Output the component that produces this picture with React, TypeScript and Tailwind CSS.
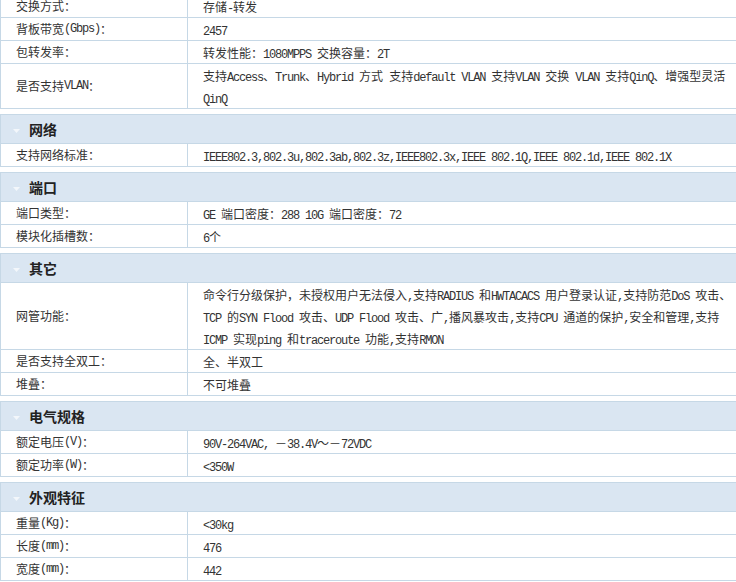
type Row = { label: string; value: string[] }
type Section = { title?: string; rows: Row[] }

const sections: Section[] = [
  {
    rows: [
      { label: '交换方式：', value: ['存储-转发'] },
      { label: '背板带宽(Gbps)：', value: ['2457'] },
      { label: '包转发率：', value: ['转发性能：1080MPPS 交换容量：2T'] },
      {
        label: '是否支持VLAN：',
        value: ['支持Access、Trunk、Hybrid 方式 支持default VLAN 支持VLAN 交换 VLAN 支持QinQ、增强型灵活', 'QinQ'],
      },
    ],
  },
  {
    title: '网络',
    rows: [
      {
        label: '支持网络标准：',
        value: ['IEEE802.3,802.3u,802.3ab,802.3z,IEEE802.3x,IEEE 802.1Q,IEEE 802.1d,IEEE 802.1X'],
      },
    ],
  },
  {
    title: '端口',
    rows: [
      { label: '端口类型：', value: ['GE 端口密度：288 10G 端口密度：72'] },
      { label: '模块化插槽数：', value: ['6个'] },
    ],
  },
  {
    title: '其它',
    rows: [
      {
        label: '网管功能：',
        value: [
          '命令行分级保护，未授权用户无法侵入,支持RADIUS 和HWTACACS 用户登录认证,支持防范DoS 攻击、',
          'TCP 的SYN Flood 攻击、UDP Flood 攻击、广,播风暴攻击,支持CPU 通道的保护,安全和管理,支持',
          'ICMP 实现ping 和traceroute 功能,支持RMON',
        ],
      },
      { label: '是否支持全双工：', value: ['全、半双工'] },
      { label: '堆叠：', value: ['不可堆叠'] },
    ],
  },
  {
    title: '电气规格',
    rows: [
      { label: '额定电压(V)：', value: ['90V-264VAC, －38.4V～－72VDC'] },
      { label: '额定功率(W)：', value: ['<350W'] },
    ],
  },
  {
    title: '外观特征',
    rows: [
      { label: '重量(Kg)：', value: ['<30kg'] },
      { label: '长度(mm)：', value: ['476'] },
      { label: '宽度(mm)：', value: ['442'] },
    ],
  },
]

// split text so latin runs get a half-width mono face, like the old SimSun look
function Mixed({ text }: { text: string }) {
  const parts = text.split(/([\u2E80-\u9FFF\u3000-\u303F\uFF00-\uFFEF]+)/).filter(Boolean)
  return (
    <>
      {parts.map((p, i) =>
        /[\u2E80-\u9FFF\u3000-\u303F\uFF00-\uFFEF]/.test(p) ? (
          <span key={i} className="font-['Noto_Sans_CJK_SC',sans-serif] text-[12px]">
            {p}
          </span>
        ) : (
          <span key={i} className="font-['Liberation_Mono',monospace] text-[12px] tracking-[-1.2px] whitespace-pre">
            {p}
          </span>
        )
      )}
    </>
  )
}

function Arrow() {
  return (
    <svg width="7" height="4" viewBox="0 0 7 4" className="mt-[3px] shrink-0">
      <polygon points="0,0 7,0 3.5,4" fill="#f3f7fb" />
    </svg>
  )
}

export default function App() {
  return (
    <div className="w-[736px] h-[582px] overflow-hidden bg-white text-[#333]">
      <div className="-mt-[5px] flex flex-col gap-[5px]">
        {sections.map((s, si) => (
          <div key={si} className="border-l border-[#c6d8e6]">
            {s.title && (
              <div className="h-[30px] flex items-center pl-[12px] bg-[#dae6f2] border-y border-[#c6d8e6]">
                <Arrow />
                <span className="ml-[9px] font-['Noto_Sans_CJK_SC',sans-serif] text-[14px] font-bold text-[#222] leading-none">
                  {s.title}
                </span>
              </div>
            )}
            {s.rows.map((r, ri) => (
              <div key={ri} className="flex border-b border-[#c6d8e6]">
                <div className="w-[187px] shrink-0 border-r border-[#c6d8e6] pl-[15px] flex items-center leading-[22px] whitespace-nowrap">
                  <Mixed text={r.label} />
                </div>
                <div className="flex-1 pl-[15px] leading-[22px] whitespace-nowrap overflow-hidden">
                  {r.value.map((line, li) => (
                    <div key={li} className="h-[22px]">
                      <Mixed text={line} />
                    </div>
                  ))}
                </div>
              </div>
            ))}
          </div>
        ))}
      </div>
    </div>
  )
}
